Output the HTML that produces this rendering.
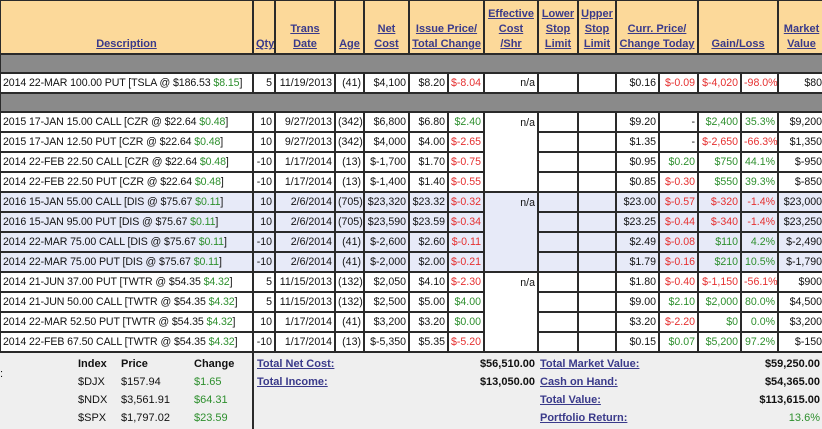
<!DOCTYPE html>
<html><head><meta charset="utf-8"><style>
body{margin:0;width:822px;height:429px;overflow:hidden;background:#fff;font-family:"Liberation Sans",Arial,sans-serif;font-size:11px;color:#111}
table.m{position:absolute;left:-1px;top:-1px;border-collapse:collapse;table-layout:fixed;width:824px;font-size:10.6px}
table.m td,table.m th{border:2px solid #2a2a2a;padding:0 2px;white-space:nowrap;overflow:hidden;text-align:right;height:18px;line-height:14px}
table.m td.d{text-align:left;padding-left:2px;letter-spacing:-0.1px}
th{background:#fcd99a;color:#3a3a8a;font-weight:bold;text-decoration:underline;vertical-align:bottom;text-align:center!important;font-size:11px;line-height:15px!important;padding-bottom:1px!important}
tr.g td{background:#8a8a8a;height:17px}
tr.b td{background:#e7eaf8}
.gr{color:#2e8f2e}.r{color:#e53030}
.f{position:absolute;top:353px;height:76px;background:#efefef}
.f a{color:#3a3a8a;text-decoration:underline;font-weight:bold;position:absolute}
.f span{position:absolute}
.bd{font-weight:bold}
</style></head><body>
<table class="m">
<colgroup><col style="width:253px"><col style="width:22px"><col style="width:60px"><col style="width:29px"><col style="width:45px"><col style="width:39px"><col style="width:36px"><col style="width:54px"><col style="width:40px"><col style="width:38px"><col style="width:43px"><col style="width:39px"><col style="width:43px"><col style="width:37px"><col style="width:47px"></colgroup>
<tr style="height:54px"><th>Description</th><th>Qty</th><th>Trans<br>Date</th><th>Age</th><th>Net<br>Cost</th><th colspan="2">Issue Price/<br>Total Change</th><th>Effective<br>Cost<br>/Shr</th><th>Lower<br>Stop<br>Limit</th><th>Upper<br>Stop<br>Limit</th><th colspan="2">Curr. Price/<br>Change Today</th><th colspan="2">Gain/Loss</th><th>Market<br>Value</th></tr>
<tr class="g"><td colspan="15"></td></tr>
<tr><td class="d">2014 22-MAR 100.00 PUT [TSLA @ $186.53 <span class="gr">$8.15</span>]</td><td>5</td><td>11/19/2013</td><td>(41)</td><td>$4,100</td><td>$8.20</td><td class="r">$-8.04</td><td>n/a</td><td></td><td></td><td>$0.16</td><td class="r">$-0.09</td><td class="r">$-4,020</td><td class="r">-98.0%</td><td>$80</td></tr>
<tr class="g"><td colspan="15"></td></tr>
<tr><td class="d">2015 17-JAN 15.00 CALL [CZR @ $22.64 <span class="gr">$0.48</span>]</td><td>10</td><td>9/27/2013</td><td>(342)</td><td>$6,800</td><td>$6.80</td><td class="gr">$2.40</td><td rowspan="4" style="vertical-align:top;padding-top:3px">n/a</td><td></td><td></td><td>$9.20</td><td>-</td><td class="gr">$2,400</td><td class="gr">35.3%</td><td>$9,200</td></tr>
<tr><td class="d">2015 17-JAN 12.50 PUT [CZR @ $22.64 <span class="gr">$0.48</span>]</td><td>10</td><td>9/27/2013</td><td>(342)</td><td>$4,000</td><td>$4.00</td><td class="r">$-2.65</td><td></td><td></td><td>$1.35</td><td>-</td><td class="r">$-2,650</td><td class="r">-66.3%</td><td>$1,350</td></tr>
<tr><td class="d">2014 22-FEB 22.50 CALL [CZR @ $22.64 <span class="gr">$0.48</span>]</td><td>-10</td><td>1/17/2014</td><td>(13)</td><td>$-1,700</td><td>$1.70</td><td class="r">$-0.75</td><td></td><td></td><td>$0.95</td><td class="gr">$0.20</td><td class="gr">$750</td><td class="gr">44.1%</td><td>$-950</td></tr>
<tr><td class="d">2014 22-FEB 22.50 PUT [CZR @ $22.64 <span class="gr">$0.48</span>]</td><td>-10</td><td>1/17/2014</td><td>(13)</td><td>$-1,400</td><td>$1.40</td><td class="r">$-0.55</td><td></td><td></td><td>$0.85</td><td class="r">$-0.30</td><td class="gr">$550</td><td class="gr">39.3%</td><td>$-850</td></tr>
<tr class="b"><td class="d">2016 15-JAN 55.00 CALL [DIS @ $75.67 <span class="gr">$0.11</span>]</td><td>10</td><td>2/6/2014</td><td>(705)</td><td>$23,320</td><td>$23.32</td><td class="r">$-0.32</td><td rowspan="4" style="vertical-align:top;padding-top:3px">n/a</td><td></td><td></td><td>$23.00</td><td class="r">$-0.57</td><td class="r">$-320</td><td class="r">-1.4%</td><td>$23,000</td></tr>
<tr class="b"><td class="d">2016 15-JAN 95.00 PUT [DIS @ $75.67 <span class="gr">$0.11</span>]</td><td>10</td><td>2/6/2014</td><td>(705)</td><td>$23,590</td><td>$23.59</td><td class="r">$-0.34</td><td></td><td></td><td>$23.25</td><td class="r">$-0.44</td><td class="r">$-340</td><td class="r">-1.4%</td><td>$23,250</td></tr>
<tr class="b"><td class="d">2014 22-MAR 75.00 CALL [DIS @ $75.67 <span class="gr">$0.11</span>]</td><td>-10</td><td>2/6/2014</td><td>(41)</td><td>$-2,600</td><td>$2.60</td><td class="r">$-0.11</td><td></td><td></td><td>$2.49</td><td class="r">$-0.08</td><td class="gr">$110</td><td class="gr">4.2%</td><td>$-2,490</td></tr>
<tr class="b"><td class="d">2014 22-MAR 75.00 PUT [DIS @ $75.67 <span class="gr">$0.11</span>]</td><td>-10</td><td>2/6/2014</td><td>(41)</td><td>$-2,000</td><td>$2.00</td><td class="r">$-0.21</td><td></td><td></td><td>$1.79</td><td class="r">$-0.16</td><td class="gr">$210</td><td class="gr">10.5%</td><td>$-1,790</td></tr>
<tr><td class="d">2014 21-JUN 37.00 PUT [TWTR @ $54.35 <span class="gr">$4.32</span>]</td><td>5</td><td>11/15/2013</td><td>(132)</td><td>$2,050</td><td>$4.10</td><td class="r">$-2.30</td><td rowspan="4" style="vertical-align:top;padding-top:3px">n/a</td><td></td><td></td><td>$1.80</td><td class="r">$-0.40</td><td class="r">$-1,150</td><td class="r">-56.1%</td><td>$900</td></tr>
<tr><td class="d">2014 21-JUN 50.00 CALL [TWTR @ $54.35 <span class="gr">$4.32</span>]</td><td>5</td><td>11/15/2013</td><td>(132)</td><td>$2,500</td><td>$5.00</td><td class="gr">$4.00</td><td></td><td></td><td>$9.00</td><td class="gr">$2.10</td><td class="gr">$2,000</td><td class="gr">80.0%</td><td>$4,500</td></tr>
<tr><td class="d">2014 22-MAR 52.50 PUT [TWTR @ $54.35 <span class="gr">$4.32</span>]</td><td>10</td><td>1/17/2014</td><td>(41)</td><td>$3,200</td><td>$3.20</td><td class="gr">$0.00</td><td></td><td></td><td>$3.20</td><td class="r">$-2.20</td><td class="gr">$0</td><td class="gr">0.0%</td><td>$3,200</td></tr>
<tr><td class="d">2014 22-FEB 67.50 CALL [TWTR @ $54.35 <span class="gr">$4.32</span>]</td><td>-10</td><td>1/17/2014</td><td>(13)</td><td>$-5,350</td><td>$5.35</td><td class="r">$-5.20</td><td></td><td></td><td>$0.15</td><td class="gr">$0.07</td><td class="gr">$5,200</td><td class="gr">97.2%</td><td>$-150</td></tr>
</table>
<div class="f" style="left:0;width:252px">
<span style="left:0;top:15px">:</span>
<span class="bd" style="left:78px;top:5px">Index</span><span class="bd" style="left:121px;top:5px">Price</span><span class="bd" style="left:194px;top:5px">Change</span>
<span style="left:78px;top:23px">$DJX</span><span style="left:121px;top:23px">$157.94</span><span class="gr" style="left:194px;top:23px">$1.65</span>
<span style="left:78px;top:41px">$NDX</span><span style="left:121px;top:41px">$3,561.91</span><span class="gr" style="left:194px;top:41px">$64.31</span>
<span style="left:78px;top:59px">$SPX</span><span style="left:121px;top:59px">$1,797.02</span><span class="gr" style="left:194px;top:59px">$23.59</span>
</div>
<div class="f" style="left:252px;width:283px;border-left:2px solid #2a2a2a;border-right:2px solid #2a2a2a">
<a style="left:3px;top:5px">Total Net Cost:</a><span class="bd" style="right:2px;top:5px">$56,510.00</span>
<a style="left:3px;top:23px">Total Income:</a><span class="bd" style="right:2px;top:23px">$13,050.00</span>
</div>
<div class="f" style="left:537px;width:285px">
<a style="left:3px;top:5px">Total Market Value:</a><span class="bd" style="right:2px;top:5px">$59,250.00</span>
<a style="left:3px;top:23px">Cash on Hand:</a><span class="bd" style="right:2px;top:23px">$54,365.00</span>
<a style="left:3px;top:41px">Total Value:</a><span class="bd" style="right:2px;top:41px">$113,615.00</span>
<a style="left:3px;top:59px">Portfolio Return:</a><span class="gr" style="right:2px;top:59px">13.6%</span>
</div>
</body></html>
